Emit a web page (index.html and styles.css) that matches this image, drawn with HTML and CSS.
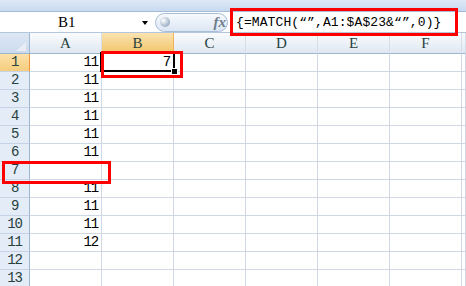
FILE: index.html
```html
<!DOCTYPE html>
<html lang="zh-CN">

<head>
    <meta charset="UTF-8">
    <title>MATCH</title>
    <link rel="stylesheet" href="styles.css">
</head>

<body>
    <div class="window">
        <div class="ribbon-edge"></div>

        <div class="formula-bar">
            <div class="name-box">
                <span class="name-ref">B1</span>
                <span class="drop-arrow"></span>
            </div>
            <div class="fx-button">
                <span class="fx-knob"></span>
                <span class="fx-label">fx</span>
            </div>
            <div class="formula-input">{=MATCH(“”,A1:$A$23&amp;“”,0)}</div>
        </div>

        <div class="sheet">
            <div class="corner"><span class="corner-tri"></span></div>
            <div class="col-head">A</div>
            <div class="col-head active">B</div>
            <div class="col-head">C</div>
            <div class="col-head">D</div>
            <div class="col-head">E</div>
            <div class="col-head">F</div>
            <div class="col-head"></div>

            <div class="row-head active">1</div><div class="cell">11</div><div class="cell">7</div><div class="cell"></div><div class="cell"></div><div class="cell"></div><div class="cell"></div><div class="cell"></div>
            <div class="row-head">2</div><div class="cell">11</div><div class="cell"></div><div class="cell"></div><div class="cell"></div><div class="cell"></div><div class="cell"></div><div class="cell"></div>
            <div class="row-head">3</div><div class="cell">11</div><div class="cell"></div><div class="cell"></div><div class="cell"></div><div class="cell"></div><div class="cell"></div><div class="cell"></div>
            <div class="row-head">4</div><div class="cell">11</div><div class="cell"></div><div class="cell"></div><div class="cell"></div><div class="cell"></div><div class="cell"></div><div class="cell"></div>
            <div class="row-head">5</div><div class="cell">11</div><div class="cell"></div><div class="cell"></div><div class="cell"></div><div class="cell"></div><div class="cell"></div><div class="cell"></div>
            <div class="row-head">6</div><div class="cell">11</div><div class="cell"></div><div class="cell"></div><div class="cell"></div><div class="cell"></div><div class="cell"></div><div class="cell"></div>
            <div class="row-head">7</div><div class="cell"></div><div class="cell"></div><div class="cell"></div><div class="cell"></div><div class="cell"></div><div class="cell"></div><div class="cell"></div>
            <div class="row-head">8</div><div class="cell">11</div><div class="cell"></div><div class="cell"></div><div class="cell"></div><div class="cell"></div><div class="cell"></div><div class="cell"></div>
            <div class="row-head">9</div><div class="cell">11</div><div class="cell"></div><div class="cell"></div><div class="cell"></div><div class="cell"></div><div class="cell"></div><div class="cell"></div>
            <div class="row-head">10</div><div class="cell">11</div><div class="cell"></div><div class="cell"></div><div class="cell"></div><div class="cell"></div><div class="cell"></div><div class="cell"></div>
            <div class="row-head">11</div><div class="cell">12</div><div class="cell"></div><div class="cell"></div><div class="cell"></div><div class="cell"></div><div class="cell"></div><div class="cell"></div>
            <div class="row-head">12</div><div class="cell"></div><div class="cell"></div><div class="cell"></div><div class="cell"></div><div class="cell"></div><div class="cell"></div><div class="cell"></div>
            <div class="row-head">13</div><div class="cell"></div><div class="cell"></div><div class="cell"></div><div class="cell"></div><div class="cell"></div><div class="cell"></div><div class="cell"></div>
        </div>

        <!-- active cell outline -->
        <div class="selection"><span class="fill-handle"></span></div>

        <!-- red annotation boxes -->
        <div class="mark mark-formula"></div>
        <div class="mark mark-result"></div>
        <div class="mark mark-row"></div>
    </div>
</body>

</html>
```

FILE: styles.css
```css
body {
    margin: 0;
    background-color: #ffffff;
    overflow: hidden;
    font-family: "Liberation Mono", monospace;
}

.window {
    position: relative;
    width: 466px;
    height: 286px;
    overflow: hidden;
}

.ribbon-edge {
    height: 11px;
    background: linear-gradient(#dfe9f6, #c8daf0);
}

.formula-bar {
    display: flex;
    align-items: center;
    height: 22px;
    box-sizing: border-box;
    border-top: 1px solid #a5bcd9;
    border-bottom: 1px solid #b4c6dc;
    background-color: #ffffff;
}

.name-box {
    flex: 0 0 155px;
    display: flex;
    align-items: center;
    position: relative;
    height: 100%;
}

.name-ref {
    margin-left: 58px;
    font-family: "Liberation Serif", serif;
    font-size: 15px;
    color: #000000;
}

.drop-arrow {
    position: absolute;
    left: 142px;
    top: 9px;
    width: 0;
    height: 0;
    border-left: 3px solid transparent;
    border-right: 3px solid transparent;
    border-top: 4px solid #000000;
}

.fx-button {
    flex: 0 0 73px;
    height: 19px;
    box-sizing: border-box;
    display: flex;
    align-items: center;
    justify-content: space-between;
    padding: 0 1px 0 4px;
    border: 1px solid #a7bdd8;
    border-radius: 10px;
    background: linear-gradient(#f7fafd, #dce6f3);
}

.fx-knob {
    width: 10px;
    height: 10px;
    border-radius: 50%;
    background: radial-gradient(circle at 35% 35%, #ffffff, #9fb1c6 70%, #7f93ab);
}

.fx-label {
    font-family: "Liberation Serif", serif;
    font-style: italic;
    font-weight: bold;
    font-size: 15px;
    color: #6f7c8c;
}

.formula-input {
    flex: 1;
    padding-left: 8px;
    font-size: 13px;
    letter-spacing: 0.1px;
    color: #000000;
    white-space: nowrap;
}

.sheet {
    display: grid;
    grid-template-columns: 30px repeat(6, 72px) 1fr;
    grid-template-rows: 21px;
    grid-auto-rows: 18px;
}

.corner {
    position: relative;
    box-sizing: border-box;
    border-right: 1px solid #9eb6ce;
    border-bottom: 1px solid #9eb6ce;
    background: linear-gradient(#dde7f4, #cbdbee);
}

.corner-tri {
    position: absolute;
    right: 3px;
    bottom: 2px;
    width: 0;
    height: 0;
    border-left: 10px solid transparent;
    border-bottom: 9px solid #e9eef5;
}

.col-head {
    box-sizing: border-box;
    display: flex;
    align-items: center;
    justify-content: center;
    border-right: 1px solid #d5dfea;
    border-bottom: 1px solid #9eb6ce;
    background: linear-gradient(#fafcfe, #dfe7f1);
    font-family: "Liberation Serif", serif;
    font-size: 15px;
    color: #27413e;
}

.col-head.active {
    border-right-color: #f2b25c;
    border-bottom-color: #f29436;
    background: linear-gradient(#fbe3b0, #f2c46b);
}

.row-head {
    box-sizing: border-box;
    display: flex;
    align-items: flex-end;
    justify-content: center;
    padding-bottom: 1px;
    border-right: 1px solid #9eb6ce;
    border-bottom: 1px solid #c5d3e4;
    background-color: #e4ecf7;
    font-size: 14px;
    letter-spacing: -1.2px;
    color: #27413e;
}

.row-head.active {
    border-right-color: #f29436;
    background: linear-gradient(#fbe1aa, #f5cd7d);
}

.cell {
    box-sizing: border-box;
    display: flex;
    align-items: flex-end;
    justify-content: flex-end;
    padding: 0 3px 1px 0;
    border-right: 1px solid #d0d7e5;
    border-bottom: 1px solid #d0d7e5;
    font-size: 14px;
    letter-spacing: -1.2px;
    color: #000000;
}

.selection {
    position: absolute;
    left: 100px;
    top: 52px;
    width: 71px;
    height: 16px;
    border: 2px solid #000000;
}

.fill-handle {
    position: absolute;
    right: -5px;
    bottom: -5px;
    width: 5px;
    height: 5px;
    background-color: #000000;
    border: 1px solid #ffffff;
}

.mark {
    position: absolute;
    border: 3px solid #ff0000;
    box-sizing: border-box;
}

.mark-formula {
    left: 230px;
    top: 8px;
    width: 228px;
    height: 28px;
}

.mark-result {
    left: 101px;
    top: 51px;
    width: 82px;
    height: 27px;
}

.mark-row {
    left: 2px;
    top: 161px;
    width: 109px;
    height: 23px;
}
```
